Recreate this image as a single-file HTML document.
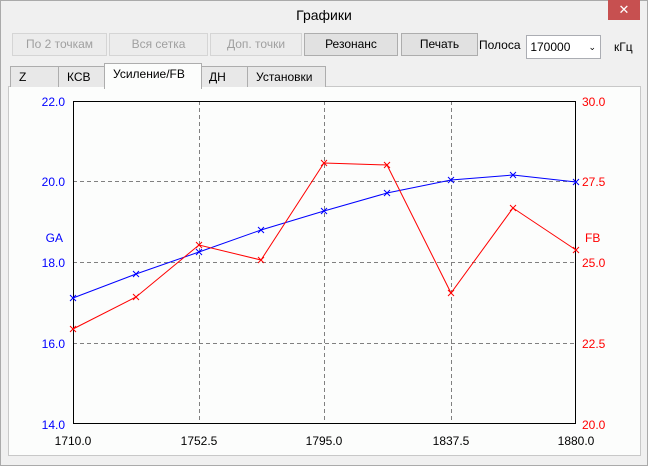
<!DOCTYPE html><html><head><meta charset="utf-8"><style>
body{margin:0;width:648px;height:466px;background:#f0f0f0;font-family:"Liberation Sans",sans-serif;font-size:12px;position:relative;overflow:hidden}
.win{position:absolute;left:0;top:0;width:646px;height:464px;border:1px solid #aaa;background:#f0f0f0}
.t{position:absolute;white-space:nowrap}
.btn{position:absolute;top:33px;height:21px;border:1px solid #adadad;background:#e1e1e1;text-align:center;line-height:21px;color:#000}
.dis{border-color:#d5d5d5;background:#ececec;color:#a0a0a0}
.tab{position:absolute;top:66px;height:20px;border:1px solid #adadad;border-bottom:none;background:#e8e8e8;line-height:21px;padding-left:8px}
</style></head><body><div class="win"></div>
<div class="t" style="left:0;width:648px;top:7px;text-align:center;font-size:14px">Графики</div>
<div style="position:absolute;left:608px;top:0;width:32px;height:20px;background:#c75050;color:#fff;text-align:center;line-height:20px;font-size:13px">✕</div>
<div class="btn dis" style="left:12px;width:93px">По 2 точкам</div>
<div class="btn dis" style="left:109px;width:97px">Вся сетка</div>
<div class="btn dis" style="left:210px;width:90px">Доп. точки</div>
<div class="btn" style="left:304px;width:92px">Резонанс</div>
<div class="btn" style="left:401px;width:75px">Печать</div>
<div class="t" style="left:479px;top:38px">Полоса</div>
<div style="position:absolute;left:526px;top:35px;width:73px;height:22px;border:1px solid #abadb3;background:#fff;line-height:22px;font-size:12px">&nbsp;170000<span style="position:absolute;right:4px;top:0;font-size:9px">⌄</span></div>
<div class="t" style="left:614px;top:40px">кГц</div>
<div style="position:absolute;left:8px;top:86px;width:631px;height:368px;border:1px solid #c8c8c8;background:#fcfdfc"></div>
<div class="tab" style="left:10px;width:39px">Z</div>
<div class="tab" style="left:58px;width:38px">КСВ</div>
<div class="tab" style="left:247px;width:69px">Установки</div>
<div class="tab" style="left:200px;width:38px">ДН</div>
<div class="tab" style="left:104px;top:63px;height:25px;width:88px;background:#fcfdfc;z-index:2">Усиление/FB</div>
<svg style="position:absolute;left:0;top:0" width="648" height="466" font-family="Liberation Sans" font-size="12">
<g stroke="#808080" stroke-dasharray="4,3" stroke-width="1">
<line x1="199.5" y1="101" x2="199.5" y2="424"/><line x1="324.5" y1="101" x2="324.5" y2="424"/><line x1="451.5" y1="101" x2="451.5" y2="424"/>
<line x1="73" y1="181.5" x2="576" y2="181.5"/><line x1="73" y1="262.5" x2="576" y2="262.5"/><line x1="73" y1="343.5" x2="576" y2="343.5"/></g>
<rect x="73.5" y="101.5" width="502" height="322" fill="none" stroke="#000"/>
<polyline fill="none" stroke="#0000ff" points="73,298 136,274 199,252 261,230 324,211 387,193 451,180 513,175 576,182"/>
<polyline fill="none" stroke="#ff0000" points="73,329 136,297 199,245 261,260 324,163 387,165 451,293 513,208 576,250"/>
<g stroke="#0000ff"><path d="M70,295l6,6M76,295l-6,6M133,271l6,6M139,271l-6,6M196,249l6,6M202,249l-6,6M258,227l6,6M264,227l-6,6M321,208l6,6M327,208l-6,6M384,190l6,6M390,190l-6,6M448,177l6,6M454,177l-6,6M510,172l6,6M516,172l-6,6M573,179l6,6M579,179l-6,6"/></g>
<g stroke="#ff0000"><path d="M70,326l6,6M76,326l-6,6M133,294l6,6M139,294l-6,6M196,242l6,6M202,242l-6,6M258,257l6,6M264,257l-6,6M321,160l6,6M327,160l-6,6M384,162l6,6M390,162l-6,6M448,290l6,6M454,290l-6,6M510,205l6,6M516,205l-6,6M573,247l6,6M579,247l-6,6"/></g>
<g fill="#0000ff" text-anchor="end"><text x="65" y="106">22.0</text><text x="65" y="186">20.0</text><text x="65" y="267">18.0</text><text x="65" y="348">16.0</text><text x="65" y="429">14.0</text><text x="63" y="242">GA</text></g>
<g fill="#ff0000"><text x="582" y="106">30.0</text><text x="582" y="186">27.5</text><text x="582" y="267">25.0</text><text x="582" y="348">22.5</text><text x="582" y="429">20.0</text><text x="585" y="242">FB</text></g>
<g fill="#000" text-anchor="middle"><text x="73" y="445">1710.0</text><text x="199" y="445">1752.5</text><text x="324" y="445">1795.0</text><text x="451" y="445">1837.5</text><text x="576" y="445">1880.0</text></g>
</svg>
</body></html>
